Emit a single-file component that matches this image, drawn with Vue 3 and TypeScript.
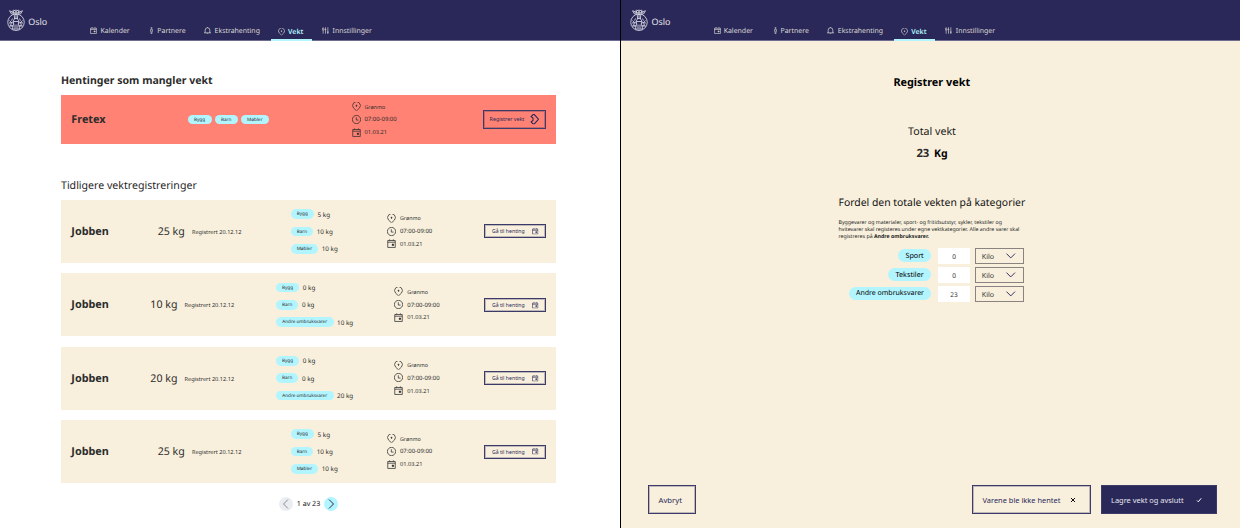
<script setup lang="ts">
interface Tag { name: string; kg?: string; w: number }
interface Job { weight: string; tags: Tag[] }

const nav = [
  { icon: 'cal', label: 'Kalender' },
  { icon: 'person', label: 'Partnere' },
  { icon: 'bell', label: 'Ekstrahenting' },
  { icon: 'pin', label: 'Vekt', active: true },
  { icon: 'sliders', label: 'Innstillinger' },
]

const missing: Tag[] = [
  { name: 'Bygg', w: 24 },
  { name: 'Barn', w: 23 },
  { name: 'Møbler', w: 28.3 },
]

const three = (): Tag[] => [
  { name: 'Bygg', kg: '5 kg', w: 23.4 },
  { name: 'Barn', kg: '10 kg', w: 22.6 },
  { name: 'Møbler', kg: '10 kg', w: 27.6 },
]
const other = (kg: string): Tag[] => [
  { name: 'Bygg', kg: '0 kg', w: 23.4 },
  { name: 'Barn', kg: '0 kg', w: 22.6 },
  { name: 'Andre ombruksvarer', kg, w: 57.7 },
]

const jobs: Job[] = [
  { weight: '25 kg', tags: three() },
  { weight: '10 kg', tags: other('10 kg') },
  { weight: '20 kg', tags: other('20 kg') },
  { weight: '25 kg', tags: three() },
]

const info = [
  { icon: 'pin', text: 'Grønmo' },
  { icon: 'clock', text: '07:00-09:00' },
  { icon: 'cal', text: '01.03.21' },
]

const categories = [
  { name: 'Sport', value: 0 },
  { name: 'Tekstiler', value: 0 },
  { name: 'Andre ombruksvarer', value: 23 },
]
</script>

<template>
  <div class="screens">
    <svg class="defs" width="0" height="0" aria-hidden="true">
      <symbol id="cal" viewBox="0 0 24 24">
        <path d="M2 4h20v18.500H2zM2 8.500h20M7 1v3M17 1v3" />
        <path d="M14 13.500h3.500V17H14z" fill="currentColor" />
      </symbol>
      <symbol id="pin" viewBox="0 0 24 24">
        <path d="M12 23.500L4.500 16.500a10.300 10.300 0 1 1 15 0z" />
        <circle cx="12" cy="10" r="1.500" fill="currentColor" />
      </symbol>
      <symbol id="clock" viewBox="0 0 24 24">
        <circle cx="12" cy="12" r="11" />
        <path d="M11.500 6v7.500h6" />
      </symbol>
      <symbol id="person" viewBox="0 0 24 24">
        <circle cx="12" cy="3" r="2" />
        <path d="M9 8h6v7h-1.500V23h-3v-8H9z" />
      </symbol>
      <symbol id="bell" viewBox="0 0 24 24">
        <path d="M0 20h24M4 20v-9a8 8.500 0 0 1 16 0v9M12 0v2.500M9.500 23.500h5" />
      </symbol>
      <symbol id="sliders" viewBox="0 0 24 24">
        <path d="M4 10v13M12 1v22M20 1v22M1 7L4 2l3 5v3H1zM9 9h6M17 17h6M20 17v5" />
      </symbol>
      <symbol id="crest" viewBox="0 0 36 44">
        <path d="M9 10L5 3.500l5.500 2L13 2l5 2.500L23 2l2.500 3.500 5.500-2L27 10zM9 7.500h18M18 1v8M13 4v5M23 4v5" />
        <circle cx="18" cy="26.500" r="16.500" />
        <path d="M15 16a3.500 3.500 0 1 1 6 0v4l3 4-1.500 6 3 10h-15l3-10-1.500-6 3-4zM15 19h6M12 25h12M14 29l-4-2-6 1M22 29l4-2 6 1M5 23l4 4-2 6 5 1M31 23l-4 4 2 6-5 1M16 31v8M20 31v8M18 12v8M4 34h8M24 34h8M11 19l-2 4M25 19l2 4" />
      </symbol>
      <symbol id="arrow" viewBox="0 0 24 28">
        <path d="M8 1.500h3.500L22.500 14 11.500 26.500H8L3 21l5-3.500v-7L3 7z" />
      </symbol>
    </svg>

    <section v-for="side in ['list', 'form']" :key="side" class="screen" :class="side">
      <header>
        <svg class="crest"><use href="#crest" /></svg>
        <span class="oslo">Oslo</span>
        <nav>
          <a v-for="n in nav" :key="n.label" :class="[n.icon, { active: n.active }]">
            <svg><use :href="'#' + n.icon" /></svg><span>{{ n.label }}</span>
          </a>
        </nav>
      </header>

      <main v-if="side === 'list'">
        <h2>Hentinger som mangler vekt</h2>
        <article class="card red">
          <h3>Fretex</h3>
          <div class="pills">
            <span v-for="t in missing" :key="t.name" class="pill" :style="{ width: t.w + 'px' }">{{ t.name }}</span>
          </div>
          <ul class="info">
            <li v-for="i in info" :key="i.icon"><svg><use :href="'#' + i.icon" /></svg>{{ i.text }}</li>
          </ul>
          <button class="go">Registrer vekt<svg><use href="#arrow" /></svg></button>
        </article>

        <h2 class="light">Tidligere vektregistreringer</h2>
        <div class="stack">
          <article v-for="(j, k) in jobs" :key="k" class="card">
            <h3>Jobben</h3>
            <div class="weight"><b>{{ j.weight }}</b><small>Registrert 20.12.12</small></div>
            <div class="tags" :class="{ wide: j.tags[2].w > 40 }">
              <div v-for="t in j.tags" :key="t.name">
                <span class="pill" :style="{ width: t.w + 'px' }">{{ t.name }}</span><span class="kg">{{ t.kg }}</span>
              </div>
            </div>
            <ul class="info">
              <li v-for="i in info" :key="i.icon"><svg><use :href="'#' + i.icon" /></svg>{{ i.text }}</li>
            </ul>
            <button class="go">Gå til henting<svg><use href="#cal" /></svg></button>
          </article>
        </div>
        <div class="pager">
          <span class="dot off"><svg viewBox="0 0 14 14"><path d="M9 2.500L4.500 7 9 11.500" /></svg></span>
          <span>1 av 23</span>
          <span class="dot"><svg viewBox="0 0 14 14"><path d="M5 2.500L9.500 7 5 11.500" /></svg></span>
        </div>
      </main>

      <main v-else>
        <h1>Registrer vekt</h1>
        <p class="total">Total vekt</p>
        <p class="sum"><span>23</span><b>Kg</b></p>
        <div class="split">
          <h4>Fordel den totale vekten på kategorier</h4>
          <p class="help">
            Byggevarer og materialer, sport- og fritidsutstyr, sykler, tekstiler og<br />
            hvitevarer skal registeres under egne vektkategorier. Alle andre varer skal<br />
            registreres på <b>Andre ombruksvarer.</b>
          </p>
          <div v-for="c in categories" :key="c.name" class="row">
            <span class="cat">{{ c.name }}</span>
            <span class="num">{{ c.value }}</span>
            <span class="unit"><span>Kilo</span><svg viewBox="0 0 10 6"><path d="M.5.500L5 5 9.500.500" /></svg></span>
          </div>
        </div>
        <footer>
          <button class="cancel">Avbryt</button>
          <button class="not">Varene ble ikke hentet<svg viewBox="0 0 6 6"><path d="M1 1l4 4M5 1L1 5" /></svg></button>
          <button class="save">Lagre vekt og avslutt<svg viewBox="0 0 6 6"><path d="M1 3.500l1.300 1.300L5.200 1.300" /></svg></button>
        </footer>
      </main>
    </section>
  </div>
</template>

<style>
body { margin: 0; overflow: hidden; }
</style>

<style scoped>
* { box-sizing: border-box; margin: 0; padding: 0; }
.screens {
  display: flex; width: 1240px; height: 528px; overflow: hidden; background: #fff; color: #2c2c2c;
  font-family: "Noto Sans", "Open Sans", sans-serif; text-rendering: geometricPrecision; white-space: nowrap;
}
.defs { display: none; }
svg { fill: none; stroke: currentColor; flex: none; display: block; overflow: visible; }
button { font: inherit; background: none; color: #2a2859; border: 1px solid #3c3a68; box-shadow: inset 0 0 0 1px rgba(42, 40, 89, .28); display: flex; align-items: center; }
ul { list-style: none; }
.screen { display: flex; flex-direction: column; height: 528px; }
.list { width: 620px; }
.form { width: 620px; border-left: 1px solid #000; background: #f8f0dd; }

header { height: 41px; flex: none; background: #2a2859; border-bottom: 1px solid #6f6d8e; color: #e3e1e6; display: flex; align-items: flex-start; }
.crest { width: 18px; height: 22px; margin: 8.700px 0 0 6.800px; stroke-width: 1.800; color: #cfcfdb; }
.oslo { font-size: 8.950px; line-height: 12px; margin: 15.500px 0 0 3.500px; width: 19px; }
nav { display: grid; grid-template-columns: 58.500px 54.500px 67.500px 51px auto; margin-left: 43px; height: 41px; }
.form .crest { margin-left: 9px; }
nav a { display: flex; align-items: center; height: 10px; margin-top: 25.800px; font-size: 6.950px; color: #dcd9d4; }
nav a > span { line-height: 10px; padding-top: 1.400px; }
nav svg { width: 7px; height: 7px; margin-right: 3.200px; stroke-width: 2.200; }
nav .person svg { margin: 0 1.500px 0 -.4px; }
nav .person span { padding-left: .4px; }
nav .bell svg { margin-left: .6px; margin-right: 3.700px; stroke-width: 2.500; }
nav .sliders svg { margin-right: 3.800px; }
nav .active { height: 15.500px; width: 41px; margin: 25.500px 0 0 0; padding: 0 0 1px 6.900px; border-bottom: 2px solid #b3f5ff; color: #b3f5ff; font-weight: 600; }
nav .active span { padding-top: 2.600px; }
nav .active svg { color: #dcd9d4; height: 7.500px; stroke-width: 2.200; margin-top: .4px; margin-right: 3.400px; }

.list main { padding: 33px 0 0 61px; width: 556px; }
h2 { font-size: 10.550px; line-height: 14px; font-weight: 700; }
h2.light { font-weight: 400; font-size: 10.600px; margin-top: 35px; color: #1f1f1f; }
.card { height: 62.800px; background: #f8f0dd; padding: 0 10px; display: flex; align-items: center; justify-content: space-between; }
.red { background: #ff8274; height: 48.500px; margin-top: 7.300px; }
.stack { display: flex; flex-direction: column; gap: 10.600px; margin-top: 7.200px; }
h3 { font-size: 10.850px; line-height: 14px; width: 38px; padding-left: .3px; }
.stack h3, .weight { padding-top: 1px; }
.red h3 { width: 34px; }
.weight { width: 84.500px; display: flex; align-items: center; }
.weight b { font-weight: 400; font-size: 10.600px; width: 34.200px; padding-left: .4px; }
.weight small { font-size: 5.600px; padding-left: .4px; }
.tags { width: 48.500px; display: flex; flex-direction: column; gap: 7.600px; padding-left: .4px; }
.tags.wide { width: 78px; }
.tags > div { display: flex; align-items: center; gap: 3.600px; height: 9.700px; }
.pill { height: 9.700px; border-radius: 5px; background: #b3f5ff; font-size: 4.620px; line-height: 10.700px; text-align: center; flex: none; }
.kg { font-size: 6.300px; line-height: 9px; }
.pills { display: flex; gap: 3.100px; width: 81.500px; }
.info { width: 49px; display: flex; flex-direction: column; gap: 3.800px; padding-bottom: .4px; }
.info li { display: flex; align-items: center; height: 9px; font-size: 5.700px; }
.info li:first-child { font-size: 5.350px; }
.info li:nth-child(2) { font-size: 5.950px; }
.info svg { width: 9px; height: 9px; margin-right: 3.900px; stroke-width: 2; }
.go { width: 61.600px; height: 14px; font-size: 5.200px; padding-left: 6.500px; }
.go svg { width: 6.500px; height: 6.500px; margin-left: 7.500px; stroke-width: 2.200; }
.red .go { width: 63px; height: 18.500px; font-size: 5.340px; padding-left: 5.600px; padding-bottom: .5px; }
.red .go svg { width: 9px; height: 10.500px; margin-left: 6px; stroke-width: 2.900; }
.pager { display: flex; align-items: center; justify-content: center; gap: 4px; margin: 14.400px 0 0; font-size: 7.150px; color: #111; }
.dot { width: 14px; height: 14px; border-radius: 50%; background: #b3f5ff; color: #2a2859; }
.dot.off { background: #eaeef2; color: #8c8c8c; }

.form main { flex: 1; display: flex; flex-direction: column; color: #000; }
.form h1 { font-size: 10.850px; line-height: 14px; text-align: center; margin-top: 34.700px; padding-left: 2.500px; }
.total { font-size: 10.650px; line-height: 14px; text-align: center; margin-top: 35.500px; padding-left: 3px; color: #1a1a1a; }
.sum { display: flex; justify-content: center; gap: 4.700px; font-size: 10.500px; line-height: 14px; font-weight: 700; margin-top: 8px; padding-left: 3px; }
.sum b { font-weight: 700; }
.sum span { color: #2c2c2c; font-size: 11.300px; }
.split { margin: 34.700px 0 0 217.500px; width: 185.500px; }
h4 { font-size: 10.400px; line-height: 14px; font-weight: 400; color: #111; }
.help { font-size: 5.260px; line-height: 6.900px; margin: 9.500px 0 7.800px; color: #222; }
.row { display: flex; justify-content: flex-end; align-items: center; height: 16px; margin-bottom: 3px; }
.cat { height: 13px; border-radius: 7px; padding: 0 7px; line-height: 14.600px; font-size: 7px; background: #b3f5ff; }
.row:nth-child(-n + 4) .cat { font-size: 7.200px; padding: 0 7.300px; }
.num { width: 32.500px; height: 16px; margin: 0 4.200px 0 6.800px; background: #fff; font-size: 6.500px; line-height: 17px; text-align: center; color: #333; }
.unit { width: 49.500px; height: 16px; border: 1px solid #8a8480; display: flex; align-items: center; font-size: 7.070px; padding-left: 6.300px; color: #333; }
.unit span { line-height: 14px; padding-top: 1.600px; }
.unit svg { width: 9.500px; height: 6px; margin-left: 11.500px; color: #2a2859; }
footer { margin-top: auto; display: flex; padding: 0 23px 13.700px 27px; }
footer button { height: 29px; font-size: 7.450px; padding-left: 9.500px; }
.cancel { width: 48px; font-size: 7.700px; margin-right: auto; }
.not { width: 118.500px; }
.not svg { margin-left: 9.500px; }
footer svg { width: 6px; height: 6px; color: #111; }
.save { width: 116.500px; margin-left: 10px; background: #2a2859; color: #e6e5ee; }
.save svg { margin-left: 12px; color: #fff; }
</style>
